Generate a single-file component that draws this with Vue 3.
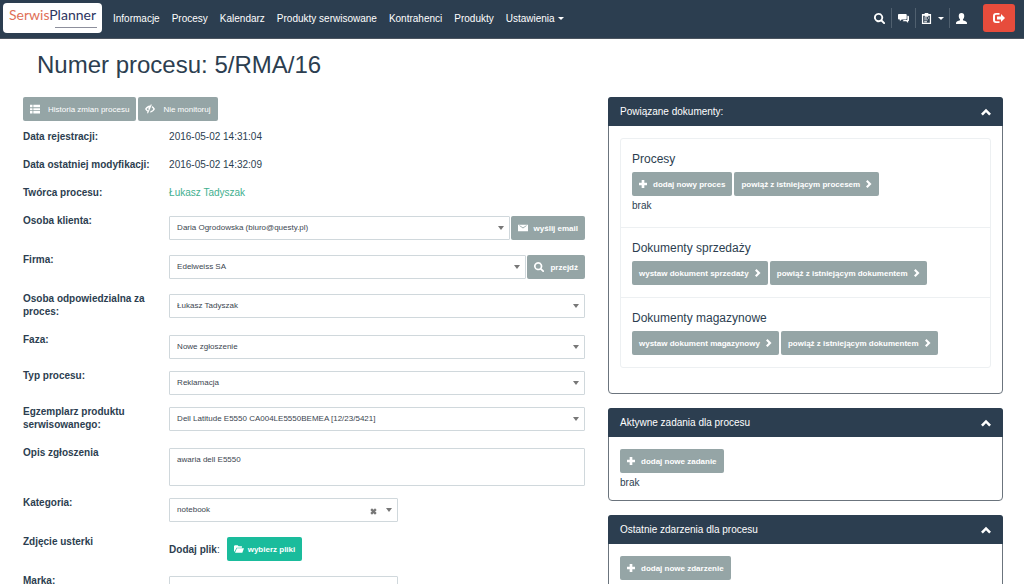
<script setup>
import { ref } from 'vue'

const nav = ['Informacje', 'Procesy', 'Kalendarz', 'Produkty serwisowane', 'Kontrahenci', 'Produkty']

const dates = [
  { label: 'Data rejestracji:', value: '2016-05-02 14:31:04' },
  { label: 'Data ostatniej modyfikacji:', value: '2016-05-02 14:32:09' },
]

const selects = [
  { id: 'client', label: 'Osoba klienta:', value: 'Daria Ogrodowska (biuro@questy.pl)', action: 'wyślij email', icon: 'mail', roomy: true },
  { id: 'company', label: 'Firma:', value: 'Edelweiss SA', action: 'przejdź', icon: 'search', roomy: true },
  { id: 'owner', label: 'Osoba odpowiedzialna za proces:', value: 'Łukasz Tadyszak' },
  { id: 'phase', label: 'Faza:', value: 'Nowe zgłoszenie' },
  { id: 'type', label: 'Typ procesu:', value: 'Reklamacja' },
  { id: 'item', label: 'Egzemplarz produktu serwisowanego:', value: 'Dell Latitude E5550 CA004LE5550BEMEA [12/23/5421]' },
]

const documents = [
  {
    title: 'Procesy',
    buttons: [
      { text: 'dodaj nowy proces', before: 'plus' },
      { text: 'powiąż z istniejącym procesem', after: true },
    ],
    note: 'brak',
  },
  {
    title: 'Dokumenty sprzedaży',
    buttons: [
      { text: 'wystaw dokument sprzedaży', after: true },
      { text: 'powiąż z istniejącym dokumentem', after: true },
    ],
  },
  {
    title: 'Dokumenty magazynowe',
    buttons: [
      { text: 'wystaw dokument magazynowy', after: true },
      { text: 'powiąż z istniejącym dokumentem', after: true },
    ],
  },
]

const panels = [
  { title: 'Aktywne zadania dla procesu', button: 'dodaj nowe zadanie' },
  { title: 'Ostatnie zdarzenia dla procesu', button: 'dodaj nowe zdarzenie' },
]

const icons = {
  search: 'M5 0a5 5 0 1 0 2.7 9.2l2.6 2.6a1 1 0 0 0 1.5-1.5L9.2 7.7A5 5 0 0 0 5 0zM5 2a3 3 0 1 1 0 6a3 3 0 0 1 0-6z',
  chat: 'M1 1h7.500a1 1 0 0 1 1 1v4a1 1 0 0 1-1 1H4L2 9V7H1a1 1 0 0 1-1-1V2a1 1 0 0 1 1-1zM10.200 3h.8a1 1 0 0 1 1 1v4a1 1 0 0 1-1 1v2L9 9H5l1.200-1.300h3a1 1 0 0 0 1-1z',
  clipboard: 'M1 1h3V0h4v1h3v11H1zM2.4 3v7.7h7.2V3H8v1H4V3zM3.5 5h3v1h-3zM3.5 7h4v1h-4zM3.5 9h3v1h-3zM7.5 5h1.3v1H7.5z',
  user: 'M6 0c2 0 3 1.300 3 3.200 0 1.500-.6 2.800-1.400 3.500v1c0 .5 3 1.200 4 2.100.4.4.4 1.200.4 2.200H0c0-1 0-1.800.4-2.200 1-.9 4-1.600 4-2.100v-1C3.600 6 3 4.700 3 3.200 3 1.300 4 0 6 0z',
  exit: 'M6.500 1H3a3 3 0 0 0-3 3v4a3 3 0 0 0 3 3h3.500V9.200H3.200A1.200 1.200 0 0 1 2 8V4a1.200 1.200 0 0 1 1.200-1.200h3.300zM8 2l4 4-4 4V7.500H4v-3h4z',
  list: 'M0 1h3v3H0zM4 1h8v3H4zM0 5h3v2.500H0zM4 5h8v2.500H4zM0 8.500h3v3H0zM4 8.500h8v3H4z',
  eye: 'M0 6c1.500-2.700 3.500-4.200 6-4.200h.5L7 .3l1.200.6-4.600 10.500-1.200-.5.7-1.600C1.800 8.600.8 7.500 0 6zM2 6c.5.900 1.100 1.500 1.800 1.900L4.300 6.500a2 2 0 0 1 .8-2.700C3.800 4.100 2.800 4.800 2 6zM8.700 2.400c1.300.7 2.400 1.900 3.300 3.600-1.500 2.700-3.500 4.200-6 4.200l.8-1.700C8.200 8.200 9.200 7.400 10 6c-.6-.9-1.300-1.600-2-2z',
  mail: 'M0 2h12v8H0zM1.500 3.200L6 6.500l4.500-3.300-.4-.4L6 5.500 1.900 2.800z',
  plus: 'M4 0h4v4h4v4H8v4H4V8H0V4h4z',
  up: 'M6 2l6 6-2.200 2.200L6 6.400l-3.800 3.800L0 8z',
  folder: 'M0 9V2.500L1 1.500h3.500l1 1.300H9.500v1.700H3L.8 9zM3.500 5.200H12L10 10.500H1.200z',
}

const description = ref('awaria dell E5550')
const brand = ref('')
</script>

<template>
  <div class="app">
    <header class="topbar">
      <a class="logo" href="#" aria-label="SerwisPlanner">
        <span class="logo-name"><span class="logo-accent">Serwis</span>Planner</span>
        <span class="logo-rule"></span>
      </a>
      <nav class="menu">
        <a v-for="n in nav" :key="n" href="#">{{ n }}</a>
        <a href="#">Ustawienia <span class="caret"></span></a>
      </nav>
      <div class="tools">
        <button class="tool" aria-label="Szukaj"><svg viewBox="0 0 12 12"><path :d="icons.search" fill-rule="evenodd" /></svg></button>
        <button class="tool" aria-label="Wiadomości"><svg viewBox="0 0 12 12"><path :d="icons.chat" /></svg></button>
        <button class="tool wide" aria-label="Schowek"><svg viewBox="0 0 12 12"><path :d="icons.clipboard" fill-rule="evenodd" /></svg><span class="caret"></span></button>
        <button class="tool" aria-label="Konto"><svg viewBox="0 0 12 12"><path :d="icons.user" /></svg></button>
      </div>
      <button class="logout" aria-label="Wyloguj"><svg viewBox="0 0 12 12"><path :d="icons.exit" fill-rule="evenodd" /></svg></button>
    </header>

    <h1>Numer procesu: 5/RMA/16</h1>

    <main class="content">
      <section class="details">
        <div class="buttons top-buttons">
          <button class="btn light"><svg viewBox="0 0 12 12"><path :d="icons.list" /></svg>Historia zmian procesu</button>
          <button class="btn light"><svg viewBox="0 0 12 12"><path :d="icons.eye" fill-rule="evenodd" /></svg>Nie monitoruj</button>
        </div>

        <div v-for="d in dates" :key="d.label" class="row">
          <span class="label">{{ d.label }}</span>
          <span class="value">{{ d.value }}</span>
        </div>
        <div class="row">
          <span class="label">Twórca procesu:</span>
          <span class="value"><a class="person" href="#">Łukasz Tadyszak</a></span>
        </div>

        <div v-for="s in selects" :key="s.id" class="row">
          <label class="label" :for="s.id">{{ s.label }}</label>
          <div class="control" :class="{ roomy: s.roomy }">
            <div class="select">
              <select :id="s.id"><option>{{ s.value }}</option></select>
              <span class="arrow"></span>
            </div>
            <button v-if="s.action" class="btn"><svg viewBox="0 0 12 12"><path :d="icons[s.icon]" fill-rule="evenodd" /></svg>{{ s.action }}</button>
          </div>
        </div>

        <div class="row">
          <label class="label" for="description">Opis zgłoszenia</label>
          <div class="control"><textarea id="description" v-model="description"></textarea></div>
        </div>

        <div class="row">
          <label class="label" for="category">Kategoria:</label>
          <div class="control roomy">
            <div class="select half">
              <select id="category"><option>notebook</option></select>
              <button class="clear" aria-label="Wyczyść"><svg viewBox="0 0 6 6"><path d="M1 1l4 4M5 1L1 5" /></svg></button>
              <span class="arrow"></span>
            </div>
          </div>
        </div>

        <div class="row">
          <span class="label">Zdjęcie usterki</span>
          <div class="control roomy files">
            <span><b>Dodaj plik</b>:</span>
            <button class="btn green"><svg viewBox="0 0 12 12"><path :d="icons.folder" /></svg>wybierz pliki</button>
          </div>
        </div>

        <div class="row">
          <label class="label" for="brand">Marka:</label>
          <div class="control"><input id="brand" v-model="brand" class="half" type="text"></div>
        </div>
      </section>

      <aside class="side">
        <section class="panel documents">
          <h2>Powiązane dokumenty:<button class="fold" aria-label="Zwiń"><svg viewBox="0 0 12 12"><path :d="icons.up" /></svg></button></h2>
          <div class="body">
            <ul class="list">
              <li v-for="d in documents" :key="d.title">
                <h3>{{ d.title }}</h3>
                <div class="buttons">
                  <button v-for="b in d.buttons" :key="b.text" class="btn">
                    <svg v-if="b.before" class="plus" viewBox="0 0 12 12"><path :d="icons[b.before]" /></svg>{{ b.text }}<svg v-if="b.after" class="next" viewBox="0 0 6 8"><path d="M0 1.500L1.500 0l4 4-4 4L0 6.500 2.500 4z" /></svg>
                  </button>
                </div>
                <p v-if="d.note">{{ d.note }}</p>
              </li>
            </ul>
          </div>
        </section>

        <section v-for="p in panels" :key="p.title" class="panel">
          <h2>{{ p.title }}<button class="fold" aria-label="Zwiń"><svg viewBox="0 0 12 12"><path :d="icons.up" /></svg></button></h2>
          <div class="body">
            <button class="btn"><svg class="plus" viewBox="0 0 12 12"><path :d="icons.plus" /></svg>{{ p.button }}</button>
            <p>brak</p>
          </div>
        </section>
      </aside>
    </main>
  </div>
</template>

<style>
body {
  background: #fff;
}
</style>

<style scoped>
.app {
  height: 100vh;
  overflow-y: auto;
  scrollbar-width: none;
  color: #2c3e50;
  font: 10px/13px "Liberation Sans", Arial, sans-serif;
}
.app *, .app *::before {
  box-sizing: border-box;
}
button, select, input, textarea {
  font-family: inherit;
  margin: 0;
}
button {
  border: 0;
  cursor: pointer;
}
svg {
  width: 10px;
  height: 10px;
  fill: currentColor;
  flex: none;
}
a {
  color: inherit;
  text-decoration: none;
}

.topbar {
  display: flex;
  align-items: center;
  height: 39px;
  padding: 0 9px 2px 3px;
  background: #2c3e50;
  border-bottom: 1px solid #4c5560;
  color: #fff;
}
.logo {
  display: flex;
  flex-direction: column;
  align-items: center;
  width: 99px;
  height: 30px;
  padding-top: 3px;
  border-radius: 4px;
  background: #fff;
  color: #2d3561;
}
.logo-name {
  font: 14px/18px Lato, sans-serif;
}
.logo-accent {
  color: #e07058;
}
.logo-rule {
  align-self: flex-end;
  width: 42px;
  margin: 3px 5px 0 0;
  border-top: 1px solid #8d8f9c;
}
.menu {
  display: flex;
  gap: 12px;
  margin-left: 11px;
  white-space: nowrap;
}
.caret {
  display: inline-block;
  margin-left: 1px;
  border: 3px solid transparent;
  border-top-color: currentColor;
  border-bottom: 0;
  vertical-align: middle;
}
.tools {
  display: flex;
  margin-left: auto;
}
.tool {
  display: flex;
  align-items: center;
  justify-content: center;
  gap: 5px;
  width: 24px;
  height: 20px;
  padding: 0;
  background: none;
  color: #fff;
}
.tool + .tool {
  border-left: 1px solid #50606f;
}
.tool.wide {
  width: 34px;
}
.tool svg {
  width: 11px;
  height: 11px;
}
.logout {
  display: flex;
  align-items: center;
  justify-content: center;
  width: 32px;
  height: 28px;
  margin-left: 10px;
  border-radius: 3px;
  background: #e74c3c;
  color: #fff;
}
.logout svg {
  width: 12px;
  height: 12px;
}

h1 {
  margin: 12px 37px 18px;
  font-size: 24px;
  font-weight: 400;
  line-height: 28px;
}
.content {
  display: grid;
  grid-template-columns: 562fr 395fr;
  align-items: start;
  gap: 23px;
  padding: 0 21px 0 23px;
}
.buttons {
  display: flex;
  gap: 2px;
}
.top-buttons {
  margin-bottom: 9px;
}
.btn {
  display: inline-flex;
  align-items: center;
  gap: 6px;
  height: 24px;
  padding: 0 7px;
  border-radius: 2px;
  background: #95a5a6;
  color: #fff;
  font-size: 8px;
  font-weight: 700;
  white-space: nowrap;
}
.btn.light {
  gap: 8px;
  font-weight: 400;
}
.btn.green {
  gap: 4px;
  background: #1abc9c;
}
.plus {
  width: 8px;
  height: 8px;
}
.next {
  width: 6px;
  height: 8px;
}

.row {
  display: grid;
  grid-template-columns: 26% 1fr;
}
.label {
  padding: 0 10px 15px 0;
  font-weight: 700;
}
.person {
  color: #3fb08f;
}
.control {
  display: flex;
  gap: 1px;
  padding: 2px 0 10px;
}
.control.roomy {
  padding-bottom: 13px;
}
.select {
  position: relative;
  flex: 1;
}
.half, .select.half {
  flex: none;
  width: 55%;
}
select, input, textarea {
  display: block;
  width: 100%;
  height: 24px;
  padding: 0 7px;
  border: 1px solid #d0d8dc;
  border-radius: 1px;
  background: #fff;
  color: #3c4650;
  font-size: 8px;
  line-height: 12px;
  appearance: none;
  outline: none;
}
input.half {
  width: 55%;
}
textarea {
  height: 38px;
  padding-top: 5px;
  resize: none;
}
.arrow {
  position: absolute;
  top: 10px;
  right: 6px;
  border: 3px solid transparent;
  border-top: 4px solid #777;
  border-bottom: 0;
  pointer-events: none;
}
.clear {
  position: absolute;
  top: 10px;
  right: 21px;
  display: flex;
  padding: 0;
  background: none;
}
.clear svg {
  width: 7px;
  height: 7px;
  fill: none;
  stroke: #777;
  stroke-width: 2;
}
.files {
  align-items: center;
  gap: 7px;
}

.panel {
  margin-bottom: 14px;
  border: 1px solid #6b747d;
  border-radius: 4px;
}
h2 {
  display: flex;
  align-items: center;
  justify-content: space-between;
  height: 29px;
  margin: -1px -1px 0;
  padding: 0 12px;
  border-radius: 3px 3px 0 0;
  background: #2c3e50;
  color: #fff;
  font-size: 10px;
  font-weight: 400;
}
.fold {
  display: flex;
  padding: 0;
  background: none;
  color: #fff;
}
.body {
  padding: 12px 11px 8px;
}
.documents .body {
  padding-bottom: 25px;
}
.list {
  margin: 0;
  padding: 0;
  border: 1px solid #edf0f2;
  border-radius: 3px;
  list-style: none;
}
.list li {
  padding: 12px 11px;
}
.list li + li {
  border-top: 1px solid #edf0f2;
}
h3 {
  margin: 0 0 4px;
  font-size: 12px;
  font-weight: 400;
  line-height: 17px;
}
p {
  margin: 0;
  line-height: 19px;
}
</style>
